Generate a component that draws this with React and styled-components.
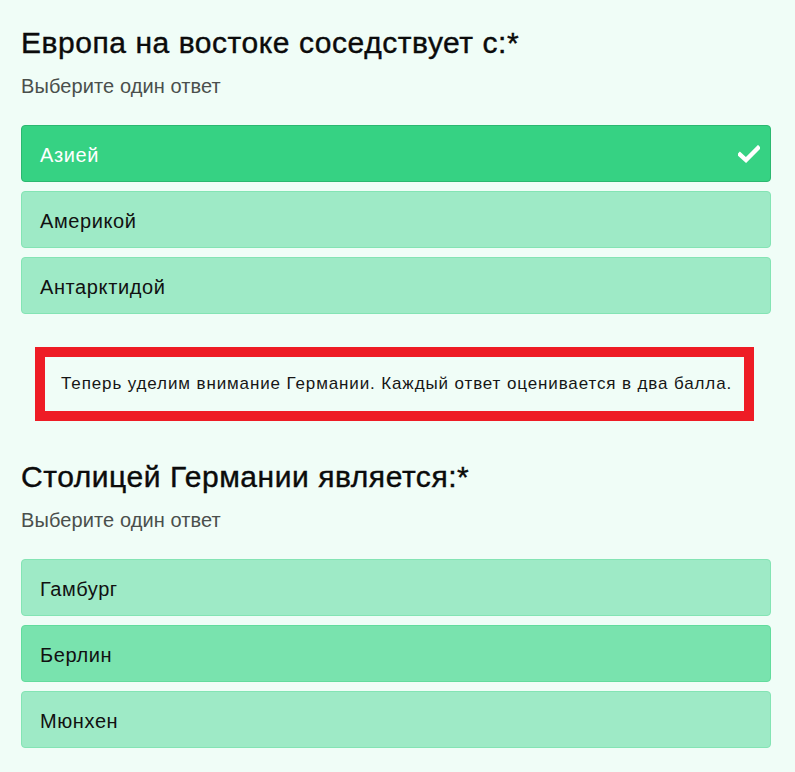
import React from "react";
import styled, { createGlobalStyle } from "styled-components";

const Global = createGlobalStyle`
  html, body { margin: 0; padding: 0; background: #f0fdf7; }
  body { font-family: "Liberation Sans", Arial, sans-serif; }
`;

const Page = styled.div`
  padding: 25px 24px 23px 21px;
  background: #f0fdf7;
  min-height: 772px;
  box-sizing: border-box;
`;

const Question = styled.section`
  display: flex;
  flex-direction: column;
`;

const Title = styled.h2`
  margin: 0;
  font-size: 30px;
  line-height: 36px;
  font-weight: 400;
  letter-spacing: 0.55px;
  color: #0b0b0b;
  -webkit-text-stroke: 0.4px #0b0b0b;
`;

const Hint = styled.p`
  margin: 13px 0 0;
  font-size: 20px;
  line-height: 24px;
  letter-spacing: 0.1px;
  color: #4a4f4c;
`;

const Options = styled.div`
  margin-top: 27px;
  display: flex;
  flex-direction: column;
  gap: 9px;
`;

const Option = styled.div`
  height: 57px;
  box-sizing: border-box;
  display: flex;
  align-items: center;
  justify-content: space-between;
  padding: 3px 10px 0 18px;
  border-radius: 4px;
  font-size: 20px;
  letter-spacing: 0.6px;
  border: 1px solid
    ${(p) => (p.$state === "selected" ? "#2bb870" : p.$state === "hover" ? "#62dc9d" : "#84e4b4")};
  background: ${(p) =>
    p.$state === "selected" ? "#36d283" : p.$state === "hover" ? "#79e3ae" : "#9eeac6"};
  color: ${(p) => (p.$state === "selected" ? "#ffffff" : "#111111")};
`;

const Check = styled.svg`
  width: 22px;
  height: 18px;
  margin-top: -3px;
`;

const Notice = styled.div`
  margin: 33px 17px 0 14px;
  border: 10px solid #ee1c25;
  padding: 0 8px 0 16px;
  height: 74px;
  box-sizing: border-box;
  display: flex;
  align-items: center;
  font-size: 17px;
  letter-spacing: 0.88px;
  white-space: nowrap;
  overflow: hidden;
  color: #161616;
  background: #f0fdf7;
`;

const SecondQuestion = styled(Question)`
  margin-top: 38px;
`;

const CheckIcon = () => (
  <Check viewBox="0 0 22 18">
    <path d="M2 9.5 L8 15 L20 3" fill="none" stroke="#fff" strokeWidth="4.4" strokeLinecap="square" />
  </Check>
);

export default function App() {
  return (
    <>
      <Global />
      <Page>
        <Question>
          <Title>Европа на востоке соседствует с:*</Title>
          <Hint>Выберите один ответ</Hint>
          <Options>
            <Option $state="selected">
              <span>Азией</span>
              <CheckIcon />
            </Option>
            <Option>Америкой</Option>
            <Option>Антарктидой</Option>
          </Options>
        </Question>
        <Notice>Теперь уделим внимание Германии. Каждый ответ оценивается в два балла.</Notice>
        <SecondQuestion>
          <Title>Столицей Германии является:*</Title>
          <Hint>Выберите один ответ</Hint>
          <Options>
            <Option>Гамбург</Option>
            <Option $state="hover">Берлин</Option>
            <Option>Мюнхен</Option>
          </Options>
        </SecondQuestion>
      </Page>
    </>
  );
}
